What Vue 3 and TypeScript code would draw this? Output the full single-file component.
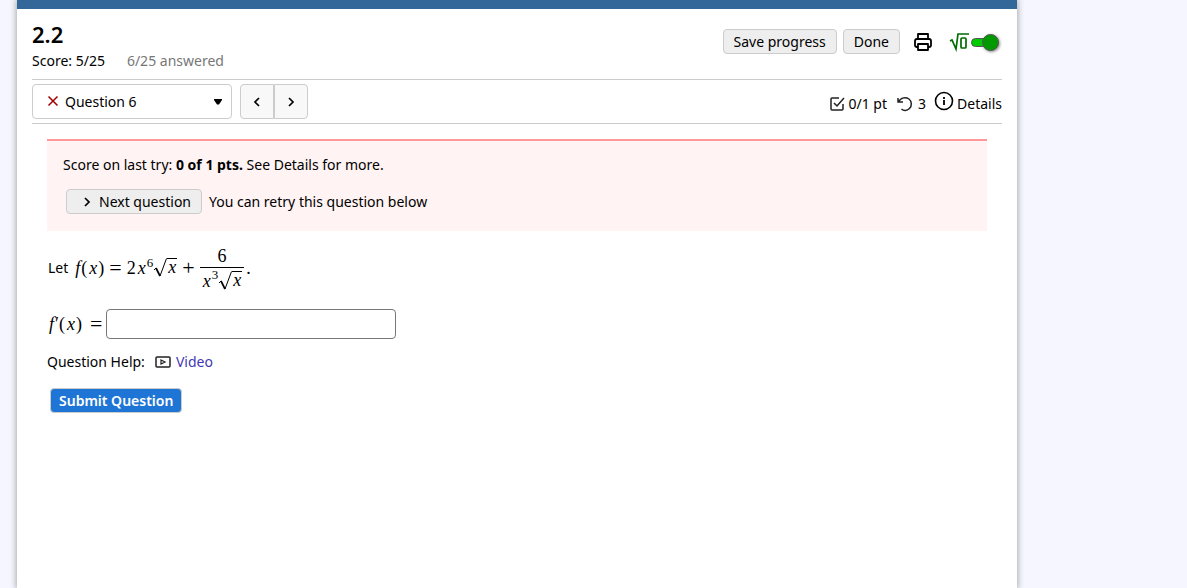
<script setup lang="ts">
import { ref } from 'vue'

const question = ref('Question 6')
const answer = ref('')
const mathEntry = ref(true)
</script>

<template>
  <div class="page">
    <div class="bar"></div>
    <main class="content">
      <header class="head">
        <div>
          <h1>2.2</h1>
          <p class="scores"><span>Score: 5/25</span><span class="muted">6/25 answered</span></p>
        </div>
        <div class="tools">
          <button class="btn" type="button">Save progress</button>
          <button class="btn" type="button">Done</button>
          <button class="bare print" type="button" aria-label="Print">
            <svg width="20" height="20" viewBox="0 0 20 20" fill="none" stroke="#000" stroke-width="1.800" stroke-linejoin="round">
              <path d="M5 7V2h10v5M5 15H4q-2 0-2-2V9q0-2 2-2h12q2 0 2 2v4q0 2-2 2h-1M5 12h10v6H5z" />
            </svg>
          </button>
          <label class="toggle">
            <svg width="20" height="20" viewBox="0 0 20 20" fill="none" stroke="#006b00">
              <path d="M1 9l2-1 4 9 2-15h11" stroke-width="1.700" />
              <rect x="12" y="6" width="5" height="10" rx="1" stroke-width="1.700" />
            </svg>
            <input v-model="mathEntry" type="checkbox" aria-label="Equation editor" />
            <span class="track"><span class="knob"></span></span>
          </label>
        </div>
      </header>

      <nav class="nav">
        <div class="picker">
          <svg class="cross" width="12" height="12" viewBox="0 0 12 12" stroke="#a00000" stroke-width="1.500"><path d="M1.500 1.500l9 9M10.500 1.500l-9 9" /></svg>
          <select v-model="question" aria-label="Question">
            <option>Question 6</option>
          </select>
          <svg class="caret" width="8" height="6" viewBox="0 0 8 6"><path d="M0 0h8v1L5 5.500H3L0 1z" /></svg>
        </div>
        <div class="steps">
          <button type="button" aria-label="Previous question">
            <svg width="8" height="10" viewBox="0 0 8 10" fill="none" stroke="#000" stroke-width="1.700"><path d="M6 1L2 5l4 4" /></svg>
          </button>
          <button type="button" aria-label="Next question">
            <svg width="8" height="10" viewBox="0 0 8 10" fill="none" stroke="#000" stroke-width="1.700"><path d="M2 1l4 4-4 4" /></svg>
          </button>
        </div>
        <div class="info">
          <svg width="16" height="16" viewBox="0 0 16 16" fill="none" stroke="#222" stroke-width="1.500">
            <path d="M10 2H3q-1 0-1 1v10q0 1 1 1h10q1 0 1-1V8M5 7l3 3 7-8" />
          </svg>
          <span class="points">0/1 pt</span>
          <svg width="16" height="16" viewBox="0 0 16 16" fill="none" stroke="#222" stroke-width="1.500">
            <path d="M1 2v4h5M1.500 6C4 1 9 1 12 3c3 2.500 3 7 .5 9.500s-6 2.500-8 .5" />
          </svg>
          <span class="tries">3</span>
          <button class="bare details" type="button">
            <svg width="20" height="20" viewBox="0 0 20 20" fill="none" stroke="#000" stroke-width="1.600">
              <circle cx="10" cy="10" r="8.500" /><path d="M10 9v5M10 6v2" stroke-width="1.800" />
            </svg>
            <span>Details</span>
          </button>
        </div>
      </nav>

      <section class="question">
        <div class="alert">
          <p>Score on last try: <strong>0 of 1 pts.</strong> See Details for more.</p>
          <div class="retry">
            <button class="btn next" type="button">
              <svg width="8" height="10" viewBox="0 0 8 10" fill="none" stroke="#000" stroke-width="1.700"><path d="M2 1l4 4-4 4" /></svg>
              Next question
            </button>
            <span>You can retry this question below</span>
          </div>
        </div>

        <div class="prompt">
          <span>Let</span>
          <span class="math"><i>f</i><span>(</span><i>x</i><span>)</span></span>
          <span class="math op">=</span>
          <span class="math">2<i>x</i><sup>6</sup>
            <span class="root">
              <svg width="14" height="20" viewBox="0 0 14 20" fill="none" stroke="#000"><path d="M1 12l2-2" /><path d="M3 10l4 8" stroke-width="1.700" /><path d="M7 18L13.500 .5" /></svg>
              <i>x</i>
            </span>
          </span>
          <span class="math op">+</span>
          <span class="math fraction">
            <span class="top">6</span>
            <span class="bottom">
              <i>x</i><sup>3</sup>
              <span class="root">
                <svg width="14" height="20" viewBox="0 0 14 20" fill="none" stroke="#000"><path d="M1 12l2-2" /><path d="M3 10l4 8" stroke-width="1.700" /><path d="M7 18L13.500 .5" /></svg>
                <i>x</i>
              </span>
            </span>
          </span>
          <span class="math stop">.</span>
        </div>

        <div class="answer">
          <label for="derivative" class="math"><i>f</i><span>′</span><span>(</span><i>x</i><span>)</span><span class="op eq">=</span></label>
          <input id="derivative" v-model="answer" type="text" />
        </div>

        <p class="help">
          <span>Question Help:</span>
          <a href="#video">
            <svg width="16" height="14" viewBox="0 0 16 14" fill="none" stroke="#222" stroke-width="1.500">
              <rect x="1" y="2" width="14" height="10" rx="1" /><path d="M6 5l4 2-4 2z" stroke-width="1.200" />
            </svg>
            Video
          </a>
        </p>
        <button class="submit" type="button">Submit Question</button>
      </section>
    </main>
  </div>
</template>

<style>
html {
  background: #f5f6ff;
}
body {
  margin: 0;
}
</style>

<style scoped>
* {
  box-sizing: border-box;
}
.page {
  max-width: 1000px;
  min-height: 100vh;
  margin-left: 17px;
  background: #fff;
  box-shadow: 0 0 6px 1px #aaa;
  color: #000;
  font: 14px/20px "Noto Sans", "Open Sans", sans-serif;
}
svg {
  display: block;
  flex: none;
}
h1,
p {
  margin: 0;
}
button,
input,
select {
  font: inherit;
  color: inherit;
}
.bar {
  height: 9px;
  background: #336699;
}
.content {
  padding: 0 15px;
}
.head {
  display: flex;
  justify-content: space-between;
  height: 71px;
  padding-top: 11px;
  border-bottom: 1px solid #ccc;
}
h1 {
  font-size: 22px;
  line-height: 29px;
  font-weight: 600;
}
.scores {
  display: flex;
  gap: 22px;
  line-height: 24px;
}
.muted {
  color: #777;
}
.tools {
  display: flex;
  align-items: center;
  gap: 6px;
  height: 43px;
  padding-right: 3px;
}
.btn {
  height: 25px;
  padding: 0 10px;
  border: 1px solid #ccc;
  border-radius: 4px;
  background: #eee;
  line-height: 20px;
}
.bare {
  padding: 0;
  border: 0;
  background: none;
}
.print {
  margin: 0 10px 0 7px;
}
.toggle {
  position: relative;
  display: flex;
  align-items: center;
  gap: 2px;
}
.toggle input {
  position: absolute;
  inset: 0;
  margin: 0;
  opacity: 0;
}
.track {
  display: flex;
  align-items: center;
  justify-content: flex-end;
  width: 28px;
  height: 9px;
  margin-top: 2px;
  border: 1px solid #555;
  border-radius: 5px;
  background: #00cc00;
}
.knob {
  flex: none;
  width: 17px;
  height: 17px;
  margin-right: -1px;
  border: 1px solid #555;
  border-radius: 50%;
  background: #009900;
  box-shadow: 1px 1px 3px #888;
}
.nav {
  display: flex;
  align-items: center;
  height: 44px;
  border-bottom: 1px solid #ccc;
}
.picker {
  position: relative;
  width: 200px;
}
.picker select {
  display: block;
  width: 100%;
  height: 35px;
  padding: 0 30px 0 32px;
  border: 1px solid #ccc;
  border-radius: 4px;
  background: #fff;
  appearance: none;
}
.cross {
  position: absolute;
  left: 15px;
  top: 11px;
}
.caret {
  position: absolute;
  right: 10px;
  top: 15px;
  pointer-events: none;
}
.steps {
  display: flex;
  margin-left: 8px;
}
.steps button {
  display: grid;
  place-items: center;
  width: 34px;
  height: 35px;
  padding: 0;
  border: 1px solid #ccc;
  background: #f8f8f8;
}
.steps button:first-child {
  border-radius: 4px 0 0 4px;
}
.steps button:last-child {
  border-radius: 0 4px 4px 0;
}
.info {
  display: flex;
  align-items: center;
  gap: 3px;
  margin-left: auto;
  padding-top: 4px;
}
.points {
  margin-right: 7px;
}
.tries {
  margin: 0 5px 0 2px;
}
.details {
  display: flex;
  align-items: center;
  gap: 3px;
}
.details svg {
  margin-bottom: 6px;
}
.question {
  padding: 15px;
}
.alert {
  height: 92px;
  padding: 14px 16px;
  border-top: 2px solid #ff9999;
  background: #fff3f3;
}
.retry {
  display: flex;
  align-items: center;
  gap: 7px;
  margin: 14px 0 0 3px;
}
.next {
  display: flex;
  align-items: center;
  gap: 8px;
  padding-left: 16px;
}
.math {
  display: inline-flex;
  align-items: center;
  font: 18px/20px "Liberation Serif", serif;
}
.math i {
  margin: 0 1px 0 2px;
}
.math.op,
.op {
  font-size: 22px;
}
sup {
  align-self: flex-start;
  margin-top: -2px;
  font-size: 13px;
  line-height: 13px;
}
.root {
  display: inline-flex;
  align-items: center;
}
.math .root i {
  margin: 0;
  padding: 0 1px 2px;
  border-top: 1px solid #000;
  line-height: 17px;
}
.prompt {
  display: flex;
  align-items: center;
  height: 48px;
  margin-top: 13px;
  padding-left: 1px;
  gap: 5px;
}
.fraction {
  flex-direction: column;
}
.fraction .top {
  line-height: 22px;
}
.fraction .bottom {
  display: flex;
  align-items: center;
  height: 24px;
  padding: 2px 2px 0 1px;
  border-top: 1px solid #000;
}
.stop {
  margin-left: -3px;
}
.answer {
  display: flex;
  align-items: center;
  gap: 4px;
  margin-top: 17px;
}
.eq {
  margin-left: 8px;
}
.answer input {
  width: 290px;
  height: 30px;
  padding: 0 6px;
  border: 1px solid #777;
  border-radius: 4px;
  background: #fff;
}
.help {
  display: flex;
  gap: 10px;
  margin-top: 13px;
}
.help a {
  display: flex;
  align-items: center;
  gap: 5px;
  color: #4338b5;
  text-decoration: none;
}
.submit {
  height: 25px;
  margin: 16px 0 0 3px;
  padding: 0 8px;
  border: 1px solid #ccc;
  border-radius: 4px;
  background: #1f75d5;
  color: #fff;
  font-weight: 600;
}
</style>
